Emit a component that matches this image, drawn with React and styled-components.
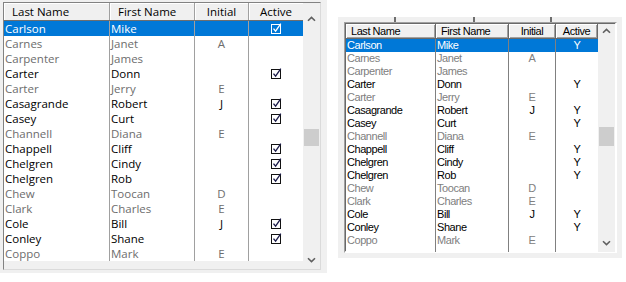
import React from 'react';
import styled, { createGlobalStyle } from 'styled-components';

const rows = [
  ['Carlson', 'Mike', '', true],
  ['Carnes', 'Janet', 'A', false],
  ['Carpenter', 'James', '', false],
  ['Carter', 'Donn', '', true],
  ['Carter', 'Jerry', 'E', false],
  ['Casagrande', 'Robert', 'J', true],
  ['Casey', 'Curt', '', true],
  ['Channell', 'Diana', 'E', false],
  ['Chappell', 'Cliff', '', true],
  ['Chelgren', 'Cindy', '', true],
  ['Chelgren', 'Rob', '', true],
  ['Chew', 'Toocan', 'D', false],
  ['Clark', 'Charles', 'E', false],
  ['Cole', 'Bill', 'J', true],
  ['Conley', 'Shane', '', true],
  ['Coppo', 'Mark', 'E', false],
];

const Global = createGlobalStyle`
  html, body { margin: 0; padding: 0; background: #fff; }
  #root { width: 626px; height: 282px; overflow: hidden; }
`;

const Page = styled.div`
  display: flex;
  align-items: flex-start;
  width: 626px;
  height: 282px;
`;

/* ---------- Left (modern) grid ---------- */
const LeftPanel = styled.div`
  width: 327px;
  height: 273px;
  box-sizing: border-box;
  padding: 2px 0 0 3px;
  background: #f0f0f0;
`;

const LeftFrame = styled.div`
  width: 318px;
  height: 268px;
  box-sizing: border-box;
  border: 1px solid;
  border-color: #828282 #dadada #dadada #828282;
  display: flex;
  background: #f0f0f0;
`;

const LeftTable = styled.div`
  width: 299px;
  display: flex;
  flex-direction: column;
  font-family: "Open Sans", "Liberation Sans", sans-serif;
  font-size: 11.5px;
`;

const leftCols = '106px 85px 54px 54px';

const LeftHeader = styled.div`
  display: grid;
  grid-template-columns: ${leftCols};
  height: 18px;
  box-sizing: border-box;
  border-bottom: 1px solid #6e6e6e;
  background: #f0f0f0;
`;

const LeftHeadCell = styled.div`
  box-sizing: border-box;
  border-right: ${p => (p.$last ? 'none' : '1px solid #a0a0a0')};
  box-shadow: inset 1px 1px 0 #ffffff;
  color: #000;
  line-height: 17px;
  padding-left: ${p => (p.$center ? 0 : 8)}px;
  text-align: ${p => (p.$center ? 'center' : 'left')};
  white-space: nowrap;
  overflow: hidden;
`;

const LeftRow = styled.div`
  display: grid;
  grid-template-columns: ${leftCols};
  height: 15px;
  background: ${p => (p.$sel ? '#0078d7' : '#ffffff')};
  color: ${p => (p.$sel ? '#ffffff' : p.$active ? '#000000' : '#6d6d6d')};
`;

const LeftCell = styled.div`
  box-sizing: border-box;
  border-right: ${p => (p.$last ? 'none' : '1px solid #a0a0a0')};
  line-height: 15px;
  padding-left: ${p => (p.$center ? 0 : 1)}px;
  display: flex;
  align-items: center;
  justify-content: ${p => (p.$center ? 'center' : 'flex-start')};
  white-space: nowrap;
  overflow: hidden;
`;

const LeftFiller = styled.div`
  flex: 1;
  background: #f0f0f0;
`;

/* ---------- Scrollbar ---------- */
const Scroll = styled.div`
  width: ${p => p.$w}px;
  display: flex;
  flex-direction: column;
  background: #f0f0f0;
`;

const ArrowBox = styled.div`
  height: ${p => p.$h}px;
  display: flex;
  align-items: ${p => (p.$bottom ? 'flex-start' : 'flex-end')};
  justify-content: center;
  padding: ${p => (p.$bottom ? '0' : '0 0 3px 0')};
  box-sizing: border-box;
`;

const Track = styled.div`
  flex: 1;
  padding-top: ${p => p.$offset}px;
  padding-left: ${p => p.$inset}px;
`;

const Thumb = styled.div`
  width: 15px;
  height: ${p => p.$h}px;
  background: #cdcdcd;
`;

const Chevron = ({ down }) => (
  <svg width="9" height="6" viewBox="0 0 9 6">
    <path
      d={down ? 'M1 1.2 L4.5 4.6 L8 1.2' : 'M1 4.8 L4.5 1.4 L8 4.8'}
      fill="none"
      stroke="#606060"
      strokeWidth="1.6"
    />
  </svg>
);

const Check = ({ sel }) => (
  <svg width="13" height="13" viewBox="0 0 13 13">
    <rect
      x="1.5"
      y="2.5"
      width="9"
      height="9"
      fill={sel ? 'none' : '#ffffff'}
      stroke={sel ? '#ffffff' : '#111111'}
      strokeWidth="1"
    />
    <path
      d="M3.5 6.6 L5.6 9.2 L10.8 1.6"
      fill="none"
      stroke={sel ? '#ffffff' : '#1c1c4a'}
      strokeWidth="1.3"
    />
  </svg>
);

/* ---------- Right (classic) grid ---------- */
const RightPanel = styled.div`
  margin: 17px 0 0 11px;
  width: 284px;
  height: 241px;
  background: #f0f0f0;
  display: flex;
  flex-direction: column;
`;

const Ruler = styled.div`
  height: 5px;
  display: flex;
`;

const Tick = styled.div`
  width: 2px;
  height: 5px;
  margin-left: ${p => p.$gap}px;
  background: #6e6e6e;
`;

const RightFrame = styled.div`
  margin-left: 6px;
  width: 273px;
  height: 231px;
  box-sizing: border-box;
  border: 1px solid;
  border-color: #a0a0a0 #ffffff #ffffff #a0a0a0;
  padding: 1px;
  background: #696969;
  background-clip: border-box;
  box-shadow: inset -1px -1px 0 #e3e3e3;
  display: flex;
`;

const RightInner = styled.div`
  flex: 1;
  display: flex;
  background: #fff;
  margin: 0 -1px -1px 0;
`;

const rightCols = '90px 73px 47px 42px';

const RightTable = styled.div`
  width: 252px;
  display: flex;
  flex-direction: column;
  font-family: "Liberation Sans", Arial, sans-serif;
  font-size: 11px;
  letter-spacing: -0.45px;
  background: #fff;
`;

const RightHeader = styled.div`
  display: grid;
  grid-template-columns: ${rightCols};
  height: 15px;
`;

const RightHeadCell = styled.div`
  box-sizing: border-box;
  background: #f0f0f0;
  border-right: 1px solid #696969;
  border-bottom: 1px solid #696969;
  box-shadow: inset 1px 1px 0 #ffffff, inset -1px -1px 0 #a0a0a0;
  color: #000;
  line-height: 14px;
  padding-left: ${p => (p.$center ? 0 : 5)}px;
  text-align: ${p => (p.$center ? 'center' : 'left')};
  white-space: nowrap;
  overflow: hidden;
`;

const RightRow = styled.div`
  display: grid;
  grid-template-columns: ${rightCols};
  height: 13px;
  background: ${p => (p.$sel ? '#0078d7' : '#ffffff')};
  color: ${p => (p.$sel ? '#ffffff' : p.$active ? '#000000' : '#808080')};
`;

const RightCell = styled.div`
  box-sizing: border-box;
  border-right: ${p => (p.$last ? 'none' : '1px solid #808080')};
  line-height: 13px;
  padding-left: ${p => (p.$center ? 0 : 1)}px;
  text-align: ${p => (p.$center ? 'center' : 'left')};
  white-space: nowrap;
  overflow: hidden;
`;

const RightFiller = styled.div`
  flex: 1;
  display: grid;
  grid-template-columns: ${rightCols};
`;

const FillerCell = styled.div`
  border-right: ${p => (p.$last ? 'none' : '1px solid #808080')};
`;

export default function App() {
  return (
    <>
      <Global />
      <Page>
        <LeftPanel>
          <LeftFrame>
            <LeftTable>
              <LeftHeader>
                <LeftHeadCell>Last Name</LeftHeadCell>
                <LeftHeadCell>First Name</LeftHeadCell>
                <LeftHeadCell $center>Initial</LeftHeadCell>
                <LeftHeadCell $center $last>Active</LeftHeadCell>
              </LeftHeader>
              {rows.map((r, i) => (
                <LeftRow key={i} $sel={i === 0} $active={r[3]}>
                  <LeftCell>{r[0]}</LeftCell>
                  <LeftCell>{r[1]}</LeftCell>
                  <LeftCell $center>{r[2]}</LeftCell>
                  <LeftCell $center $last>{r[3] ? <Check sel={i === 0} /> : null}</LeftCell>
                </LeftRow>
              ))}
              <LeftFiller />
            </LeftTable>
            <Scroll $w={17}>
              <ArrowBox $h={22}><Chevron /></ArrowBox>
              <Track $offset={104} $inset={1}><Thumb $h={17} /></Track>
              <ArrowBox $h={12} $bottom><Chevron down /></ArrowBox>
            </Scroll>
          </LeftFrame>
        </LeftPanel>

        <RightPanel>
          <Ruler>
            <Tick $gap={56} />
            <Tick $gap={77} />
            <Tick $gap={75} />
          </Ruler>
          <RightFrame>
            <RightInner>
              <RightTable>
                <RightHeader>
                  <RightHeadCell>Last Name</RightHeadCell>
                  <RightHeadCell>First Name</RightHeadCell>
                  <RightHeadCell $center>Initial</RightHeadCell>
                  <RightHeadCell $center>Active</RightHeadCell>
                </RightHeader>
                {rows.map((r, i) => (
                  <RightRow key={i} $sel={i === 0} $active={r[3]}>
                    <RightCell>{r[0]}</RightCell>
                    <RightCell>{r[1]}</RightCell>
                    <RightCell $center>{r[2]}</RightCell>
                    <RightCell $center $last>{r[3] ? 'Y' : ''}</RightCell>
                  </RightRow>
                ))}
                <RightFiller>
                  <FillerCell />
                  <FillerCell />
                  <FillerCell />
                  <FillerCell $last />
                </RightFiller>
              </RightTable>
              <Scroll $w={17}>
                <ArrowBox $h={13}><Chevron /></ArrowBox>
                <Track $offset={90} $inset={1}><Thumb $h={19} /></Track>
                <ArrowBox $h={12} $bottom><Chevron down /></ArrowBox>
              </Scroll>
            </RightInner>
          </RightFrame>
        </RightPanel>
      </Page>
    </>
  );
}
